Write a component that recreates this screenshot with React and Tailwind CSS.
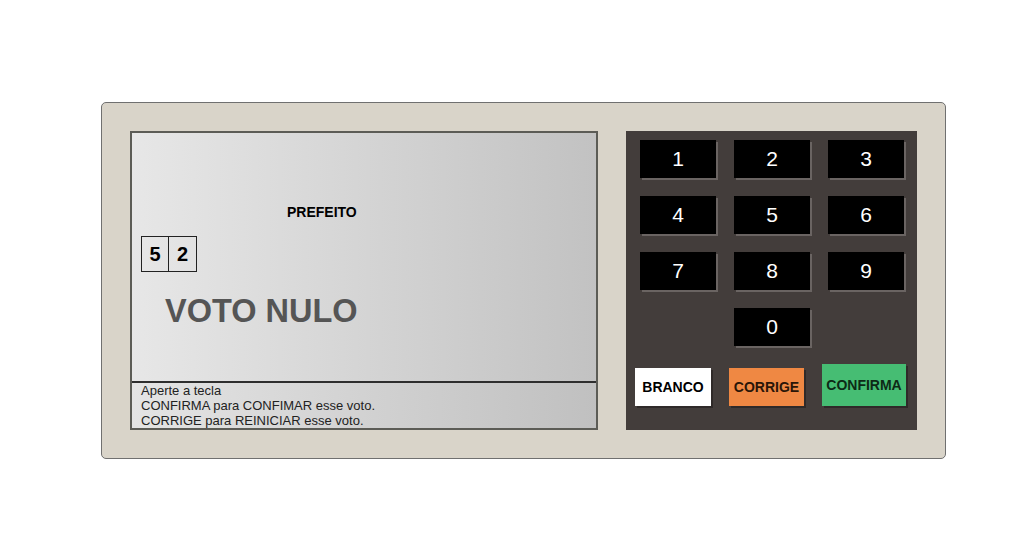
import React from 'react';

const keys = ['1', '2', '3', '4', '5', '6', '7', '8', '9'];

function Key({ label }) {
  return (
    <div className="w-[76px] h-[38px] bg-black text-white text-[21px] flex items-center justify-center pb-[1px] shadow-[2px_2px_0_#6a6462]">
      {label}
    </div>
  );
}

export default function App() {
  return (
    <div className="w-[1009px] h-[555px] bg-white font-['Liberation_Sans',Arial,sans-serif] pt-[102px] pl-[101px]">
      <div className="w-[845px] h-[357px] bg-[#d9d4c9] border border-[#707070] rounded-[5px] flex pl-[28px] pt-[28px] gap-[28px]">
        {/* tela */}
        <div className="w-[468px] h-[299px] border-2 border-[#5c5c56] flex flex-col">
          <div className="flex-1 bg-gradient-to-r from-[#e7e7e7] to-[#c2c2c2] flex flex-col pl-[9px]">
            <div className="mt-[72px] ml-[146px] text-[14px] font-bold text-black leading-none">PREFEITO</div>
            <div className="flex mt-[17px]">
              <div className="w-[28px] h-[36px] border border-[#222] flex items-center justify-center text-[20px] font-bold text-black">5</div>
              <div className="w-[28px] h-[36px] border border-l-0 border-[#222] flex items-center justify-center text-[20px] font-bold text-black">2</div>
            </div>
            <div className="mt-[23px] ml-[24px] text-[32.5px] font-bold text-[#555] leading-none">VOTO NULO</div>
          </div>
          <div className="h-[47px] border-t-2 border-[#2e2e2e] bg-gradient-to-r from-[#e4e4e4] to-[#c0c0c0] pl-[9px] pt-0 text-[13px] leading-[15px] text-[#222]">
            <p>Aperte a tecla</p>
            <p>CONFIRMA para CONFIMAR esse voto.</p>
            <p>CORRIGE para REINICIAR esse voto.</p>
          </div>
        </div>
        {/* teclado */}
        <div className="w-[291px] h-[299px] bg-[#433d3b] pl-[14px] pt-[9px] flex flex-col">
          <div className="grid grid-cols-[76px_76px_76px] gap-x-[18px] gap-y-[18px]">
            {keys.map(k => (
              <Key key={k} label={k} />
            ))}
            <div />
            <Key label="0" />
            <div />
          </div>
          <div className="flex items-end gap-[18px] mt-[18px] -ml-[5px]">
            <div className="w-[76px] h-[38px] bg-white text-black text-[14px] font-bold flex items-center justify-center shadow-[2px_2px_0_#2f2a29]">BRANCO</div>
            <div className="w-[75px] h-[38px] bg-[#ef8843] text-[#2a1608] text-[14px] font-bold flex items-center justify-center shadow-[2px_2px_0_#2f2a29]">CORRIGE</div>
            <div className="w-[84px] h-[42px] bg-[#46bd73] text-[#0d2a16] text-[14px] font-bold flex items-center justify-center shadow-[2px_2px_0_#2f2a29]">CONFIRMA</div>
          </div>
        </div>
      </div>
    </div>
  );
}
